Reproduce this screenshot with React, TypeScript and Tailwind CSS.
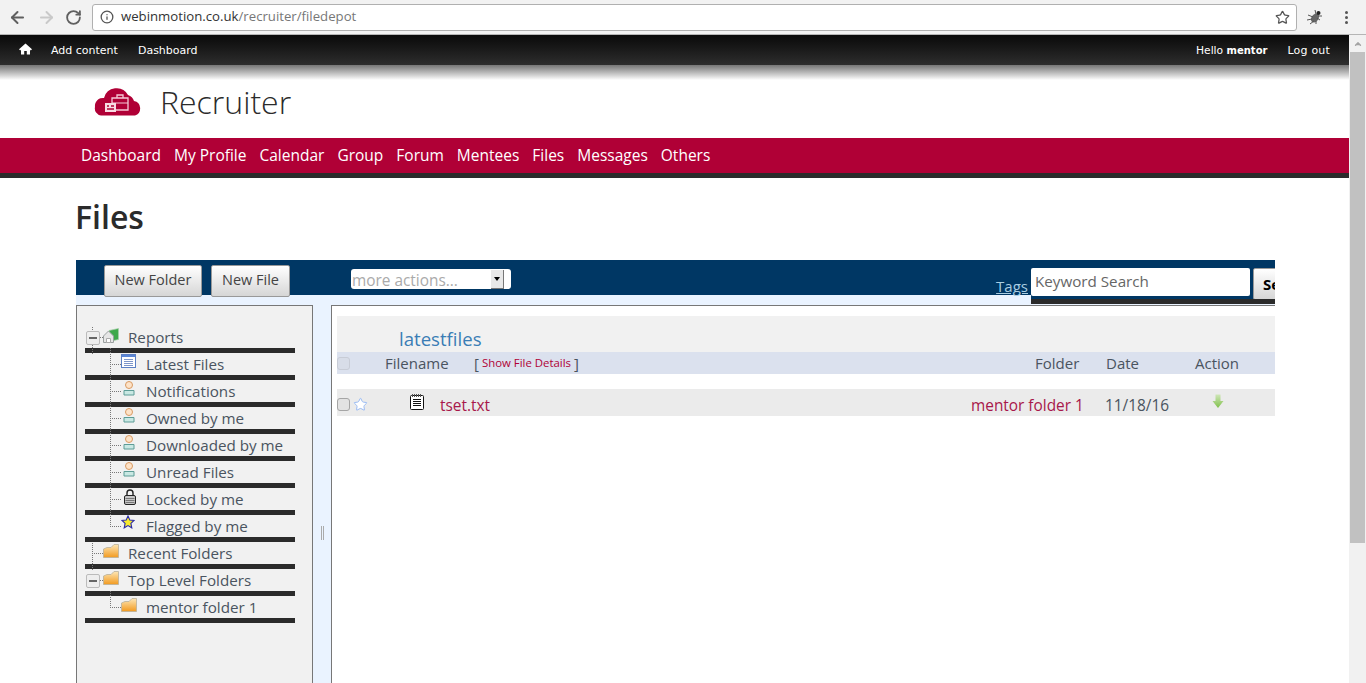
import { ArrowLeft, ArrowRight, RotateCw, Info, Star, ChevronUp } from "lucide-react";

const NAV = ["Dashboard", "My Profile", "Calendar", "Group", "Forum", "Mentees", "Files", "Messages", "Others"];
const UI_FONT = "font-['Open_Sans',sans-serif]";

type IconKind = "reports" | "latest" | "user" | "lock" | "star" | "folder";

function TreeIcon({ kind }: { kind: IconKind }) {
    if (kind === "reports") {
        return (
            <svg width="16" height="15" viewBox="0 0 16 15">
                <path d="M6 2.5 L15.5 0.5 V11.5 L6 13.5 Z" fill="#3da84a" stroke="#a9cfac" strokeWidth="0.7" />
                <path d="M0.5 14.5 V8 L5.5 3 L10.5 8 V14.5 Z" fill="#e6e6e6" stroke="#9aa0a0" />
                <path d="M3.5 14.5 V10.5 H7.5 V14.5 Z" fill="#fff" stroke="#aaa" />
            </svg>
        );
    }
    if (kind === "latest") {
        return (
            <svg width="15" height="14" viewBox="0 0 15 14">
                <rect x="0.5" y="0.5" width="14" height="13" fill="#fff" stroke="#5b7fc4" />
                <rect x="1" y="1" width="13" height="2" fill="#5b86d6" />
                <path d="M3 5.5H12M3 7.5H12M3 9.5H12M3 11.5H12" stroke="#7d95c9" />
            </svg>
        );
    }
    if (kind === "user") {
        return (
            <svg width="14" height="15" viewBox="0 0 14 15">
                <circle cx="8" cy="4" r="3.5" fill="#fde3c8" stroke="#d99a62" />
                <path d="M3 14 V9.5 H13 V14 Z" fill="#c9e8e3" stroke="#5d9c96" />
            </svg>
        );
    }
    if (kind === "lock") {
        return (
            <svg width="15" height="16" viewBox="0 0 15 16">
                <path d="M6 7 V4 A3 3 0 0 1 12 4 V7" fill="none" stroke="#222" strokeWidth="1.4" />
                <rect x="3.5" y="6.5" width="11" height="9" rx="1.5" fill="#c6c6c6" stroke="#222" />
                <path d="M4.5 9.5H13.5M4.5 11.5H13.5M4.5 13.5H13.5" stroke="#777" />
            </svg>
        );
    }
    if (kind === "star") {
        return (
            <svg width="14" height="14" viewBox="0 0 14 14">
                <path d="M7 1 L8.8 5 L13 5.5 L9.9 8.4 L10.8 12.8 L7 10.6 L3.2 12.8 L4.1 8.4 L1 5.5 L5.2 5 Z" fill="#f6ea2c" stroke="#2a2aa8" strokeWidth="1.1" />
            </svg>
        );
    }
    return (
        <svg width="16" height="14" viewBox="0 0 16 14">
            <defs>
                <linearGradient id="folderFill" x1="0" y1="0" x2="0" y2="1">
                    <stop offset="0" stopColor="#fde6b4" />
                    <stop offset="1" stopColor="#f29a1f" />
                </linearGradient>
            </defs>
            <path d="M0.5 13.5 V5 L4 3.5 H8 L11 0.5 H15.5 V13.5 Z" fill="url(#folderFill)" stroke="#b9b09a" strokeWidth="0.8" />
        </svg>
    );
}

function TreeRow({ level, icon, label, toggle, trunkLast, subLast }: {
    level: 0 | 1;
    icon: IconKind;
    label: string;
    toggle?: boolean;
    trunkLast?: boolean;
    subLast?: boolean;
}) {
    const iconTop = icon === "folder" || icon === "reports" ? "top-[2px]" : icon === "star" ? "top-0" : "top-[1px]";
    return (
        <div className="relative flex h-[27px] border-b-[5px] border-[#2b2b2b] text-[15.2px] text-[#4a5460]">
            {level === 1 && !subLast && <div className="absolute left-[25px] -top-[5px] h-[27px] border-l border-dotted border-[#777]" />}
            {level === 1 && subLast && <div className="absolute left-[25px] -top-[5px] h-[17px] border-l border-dotted border-[#777]" />}
            {level === 1 && <div className="absolute left-[25px] top-[11px] w-[11px] border-t border-dotted border-[#777]" />}
            {level === 0 && !trunkLast && <div className="absolute left-[7px] top-[1px] h-[27px] border-l border-dotted border-[#777]" />}
            {level === 0 && <div className="absolute left-[7px] top-[11px] w-[11px] border-t border-dotted border-[#777]" />}
            {toggle && (
                <div className="absolute left-[1px] top-[5px] flex h-[14px] w-[14px] items-center justify-center rounded-[2px] border border-[#bbb] bg-[#eee]">
                    <div className="h-[2px] w-[8px] bg-[#666]" />
                </div>
            )}
            <div className={`absolute ${iconTop} ${level === 0 ? "left-[18px]" : "left-[36px]"}`}>
                <TreeIcon kind={icon} />
            </div>
            <span className={level === 0 ? "pl-[43px] leading-[22px] whitespace-nowrap" : "pl-[61px] leading-[22px] whitespace-nowrap"}>{label}</span>
        </div>
    );
}

function Checkbox({ faint }: { faint?: boolean }) {
    return <div className={faint ? "h-[13px] w-[13px] shrink-0 rounded-[3px] border border-[#c8ccd6] bg-[#d8dde8]" : "h-[13px] w-[13px] shrink-0 rounded-[3px] border border-[#a5a5a5] bg-[#e2e2e2]"} />;
}

export default function App() {
    return (
        <div className={`${UI_FONT} flex h-[683px] w-[1366px] flex-col overflow-hidden bg-white`}>
            {/* browser chrome */}
            <div className="flex h-[35px] shrink-0 items-center border-b border-[#b5b5b5] bg-[#f2f2f2]">
                <ArrowLeft className="ml-[8px] h-[19px] w-[19px] text-[#5f5f5f]" strokeWidth={2.5} />
                <ArrowRight className="ml-[10px] h-[19px] w-[19px] text-[#c9c9c9]" strokeWidth={2.5} />
                <RotateCw className="ml-[9px] h-[17px] w-[17px] text-[#5f5f5f]" strokeWidth={2.6} />
                <div className="ml-[10px] flex h-[27px] w-[1205px] items-center rounded-[3px] border border-[#b0b0b0] bg-white">
                    <Info className="ml-[7px] h-[14px] w-[14px] text-[#555]" strokeWidth={2.2} />
                    <span className="ml-[7px] text-[13.2px] text-[#333]">
                        webinmotion.co.uk<span className="text-[#777]">/recruiter/filedepot</span>
                    </span>
                    <Star className="ml-auto mr-[6px] h-[15px] w-[15px] text-[#555]" strokeWidth={2} />
                </div>
                <svg className="ml-[10px]" width="16" height="16" viewBox="0 0 16 16">
                    <ellipse cx="8" cy="9" rx="3.5" ry="5" fill="#666" transform="rotate(35 8 9)" />
                    <circle cx="11.5" cy="4" r="2" fill="#222" />
                    <path d="M1 6 L6 8 M0 11 L5 10 M3 15 L7 12 M9 15 L9 12 M13 11 L10 9 M8 1 L9 5 M15 7 L11 7" stroke="#555" strokeWidth="1" />
                </svg>
                <div className="ml-[22px] flex flex-col gap-[2px]">
                    <div className="h-[3px] w-[3px] rounded-full bg-[#555]" />
                    <div className="h-[3px] w-[3px] rounded-full bg-[#555]" />
                    <div className="h-[3px] w-[3px] rounded-full bg-[#555]" />
                </div>
            </div>

            <div className="flex min-h-0 flex-1">
                <div className="min-w-0 flex-1">
                    {/* admin bar */}
                    <div className="flex h-[30px] items-center bg-gradient-to-b from-[#0a0a0a] to-[#2e2e2e] pt-[2px] font-['DejaVu_Sans',sans-serif] text-[11px] font-medium text-white">
                        <svg className="ml-[19px] mb-[4px]" width="13" height="12" viewBox="0 0 13 12">
                            <path d="M6.5 0.5 L13 6.3 L11.8 7.4 L11 6.8 V11.5 H7.8 V8 H5.2 V11.5 H2 V6.8 L1.2 7.4 L0 6.3 Z" fill="#fff" />
                        </svg>
                        <span className="ml-[19px]">Add content</span>
                        <span className="ml-[20px]">Dashboard</span>
                        <span className="ml-auto text-[10.7px]">Hello <b className="text-[10px]">mentor</b></span>
                        <span className="ml-[20px] mr-[19px] tracking-[0.2px]">Log out</span>
                    </div>
                    <div className="h-[15px] bg-gradient-to-b from-[#777] to-white" />

                    {/* site header */}
                    <div className="flex h-[58px] items-start pl-[94px]">
                        <svg width="48" height="30" viewBox="0 0 48 30" className="mt-[6px]">
                            <path d="M7 29.5 A7 7 0 0 1 1 21 A8 8 0 0 1 10 12 A13 13 0 0 1 34 9 A9 9 0 0 1 40 15 A7.5 7.5 0 0 1 41 29.5 Z" fill="#b00036" />
                            <path d="M18 12 H34 V24 H18 Z M23 12 V9 H29 V12" fill="none" stroke="#f5c9d6" strokeWidth="1.3" />
                            <path d="M18 17 H34" stroke="#f5c9d6" />
                            <rect x="11" y="17" width="11" height="9" fill="#f8dbe3" />
                            <path d="M13 20 H15 M17 20 H20 M13 23 H20" stroke="#b00036" strokeWidth="1.5" />
                        </svg>
                        <span className="ml-[18px] mt-[1px] text-[32px] font-light leading-[42px] text-[#2b2b2b]">Recruiter</span>
                    </div>

                    {/* main nav */}
                    <nav className="flex h-[40px] gap-[13px] border-b-[5px] border-[#2b2b2b] bg-[#b00036] pl-[81px] text-[15.5px] font-medium leading-[35px] text-white">
                        {NAV.map(item => <span key={item}>{item}</span>)}
                    </nav>

                    <div className="pl-[76px] pr-[74px]">
                        <h1 className="mt-[18px] h-[64px] -translate-x-[1px] text-[32px] font-semibold leading-[41px] text-[#2b2b2b]">Files</h1>

                        {/* toolbar */}
                        <div className="relative z-10 flex h-[35px] items-start bg-[#003764]">
                            <button className="ml-[28px] mt-[5px] h-[32px] w-[98px] rounded-[2px] border border-[#999] bg-gradient-to-b from-white to-[#d6d6d6] pb-[2px] text-[14.5px] text-[#444]">New Folder</button>
                            <button className="ml-[9px] mt-[5px] h-[32px] w-[79px] rounded-[2px] border border-[#999] bg-gradient-to-b from-white to-[#d6d6d6] pb-[2px] text-[14.5px] text-[#444]">New File</button>
                            <div className="ml-[61px] mt-[9px] flex h-[20px] w-[160px] items-center rounded-[3px] bg-white text-[15.4px] text-[#aaa]">
                                <span className="flex-1 pl-[1px] pt-[3px] leading-[20px]">more actions...</span>
                                <div className="flex h-[19px] w-[13px] items-center justify-center border-b border-r border-[#777] bg-[#e8e8e8]">
                                    <div className="h-0 w-0 border-x-[3px] border-t-[4px] border-x-transparent border-t-black" />
                                </div>
                                <div className="w-[7px]" />
                            </div>
                            <a className="ml-auto mt-[15px] text-[15px] leading-[22px] text-[#a9cde2] underline">Tags</a>
                            <div className="ml-[3px] flex h-[44px] w-[244px] shrink-0 items-start overflow-hidden border-b-[5px] border-[#2b2b2b] bg-[#003764] pt-[8px]">
                                <div className="h-[28px] w-[219px] shrink-0 rounded-[2px] bg-white pl-[4px] text-[15.2px] leading-[27px] text-[#666]">Keyword Search</div>
                                <button className="ml-[3px] h-[32px] w-[60px] shrink-0 rounded-[2px] border border-[#999] bg-gradient-to-b from-white to-[#d6d6d6] pl-[9px] text-left text-[15px] font-bold text-black">Search</button>
                            </div>
                        </div>

                        {/* panels */}
                        <div className="mt-0 flex h-[388px] bg-[#eaf3ff] pt-[10px]">
                            <div className="h-[400px] w-[237px] shrink-0 border border-[#777] bg-[#f1f1f1] pl-[8px] pr-[17px] pt-[20px]">
                                <TreeRow level={0} icon="reports" label="Reports" toggle />
                                <TreeRow level={1} icon="latest" label="Latest Files" />
                                <TreeRow level={1} icon="user" label="Notifications" />
                                <TreeRow level={1} icon="user" label="Owned by me" />
                                <TreeRow level={1} icon="user" label="Downloaded by me" />
                                <TreeRow level={1} icon="user" label="Unread Files" />
                                <TreeRow level={1} icon="lock" label="Locked by me" />
                                <TreeRow level={1} icon="star" label="Flagged by me" subLast />
                                <TreeRow level={0} icon="folder" label="Recent Folders" />
                                <TreeRow level={0} icon="folder" label="Top Level Folders" toggle trunkLast />
                                <TreeRow level={1} icon="folder" label="mentor folder 1" subLast />
                            </div>

                            {/* splitter */}
                            <div className="flex w-[18px] shrink-0 justify-center pl-[1px] pt-[221px]">
                                <div className="h-[14px] w-[3px] border-x border-[#aaa]" />
                            </div>

                            <div className="min-w-0 flex-1 border-l border-t border-[#777] bg-white pl-[5px] pt-[10px]">
                                <div className="h-[36px] bg-[#f1f1f1] pl-[62px] pt-[10px] text-[18.6px] leading-[25px] text-[#3a7db5]">latestfiles</div>

                                <div className="flex h-[22px] items-center bg-[#dbe1ee] text-[15px] text-[#4a5460]">
                                    <Checkbox faint />
                                    <span className="ml-[35px] w-[89px] shrink-0">Filename</span>
                                    <span>[</span>
                                    <span className="ml-[3px] text-[11.4px] text-[#b00036]">Show File Details</span>
                                    <span className="ml-[3px]">]</span>
                                    <span className="ml-auto w-[71px] shrink-0">Folder</span>
                                    <span className="w-[89px] shrink-0">Date</span>
                                    <span className="w-[80px] shrink-0">Action</span>
                                </div>

                                <div className="mt-[15px] flex h-[27px] items-center bg-[#ebebeb] pt-[3px] text-[15.4px]">
                                    <Checkbox />
                                    <Star className="ml-[3px] h-[15px] w-[15px] fill-white text-[#93b6f2]" strokeWidth={1.5} />
                                    <svg className="ml-[42px] mb-[5px]" width="14" height="16" viewBox="0 0 14 16">
                                        <rect x="0.5" y="1.5" width="13" height="14" rx="1" fill="#fff" stroke="#111" />
                                        <path d="M2.5 0V3M4.5 0V3M6.5 0V3M8.5 0V3M10.5 0V3" stroke="#555" />
                                        <path d="M3 5.5H11M3 7.5H11M3 9.5H11M3 11.5H11" stroke="#111" />
                                    </svg>
                                    <span className="ml-[16px] pt-[4px] text-[#a8174a]">tset.txt</span>
                                    <span className="ml-auto w-[134px] shrink-0 pt-[4px] text-[#a8174a]">mentor folder 1</span>
                                    <span className="w-[107px] shrink-0 pt-[4px] text-[#4a5460]">11/18/16</span>
                                    <svg className="mb-[5px] mr-[51px]" width="12" height="15" viewBox="0 0 12 15">
                                        <defs>
                                            <linearGradient id="arrowFill" x1="0" y1="0" x2="0" y2="1">
                                                <stop offset="0" stopColor="#cfe6b8" />
                                                <stop offset="1" stopColor="#7fc04a" />
                                            </linearGradient>
                                        </defs>
                                        <path d="M3.5 0.5 H8.5 V7 H11.5 L6 14 L0.5 7 H3.5 Z" fill="url(#arrowFill)" />
                                    </svg>
                                </div>
                            </div>
                        </div>
                    </div>
                </div>

                {/* page scrollbar */}
                <div className="flex w-[17px] shrink-0 flex-col bg-[#f1f1f1]">
                    <div className="flex h-[17px] items-center justify-center">
                        <ChevronUp className="h-[10px] w-[10px] fill-[#a3a3a3] text-[#a3a3a3]" strokeWidth={3} />
                    </div>
                    <div className="ml-[1px] h-[491px] w-[15px] bg-[#c1c1c1]" />
                </div>
            </div>
        </div>
    );
}
